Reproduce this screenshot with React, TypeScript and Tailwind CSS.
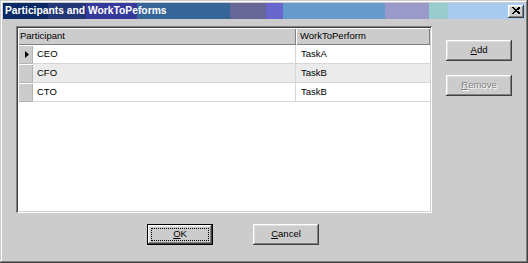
import React from 'react';

const raised =
  'shadow-[inset_-1px_-1px_0_#404040,inset_1px_1px_0_#ffffff,inset_-2px_-2px_0_#808080,inset_2px_2px_0_#dfdfdf]';

const rows = [
  { participant: 'CEO', work: 'TaskA', current: true },
  { participant: 'CFO', work: 'TaskB', current: false },
  { participant: 'CTO', work: 'TaskB', current: false },
];

function Button({ label, hotkey, disabled, isDefault }: { label: string; hotkey: number; disabled?: boolean; isDefault?: boolean }) {
  const text = (
    <span
      className={
        disabled
          ? 'text-[#808080] [text-shadow:1px_1px_0_#ffffff]'
          : 'text-black'
      }
    >
      {label.slice(0, hotkey)}
      <span className="underline underline-offset-[1px]">{label[hotkey]}</span>
      {label.slice(hotkey + 1)}
    </span>
  );

  if (isDefault) {
    return (
      <div className="flex h-[21px] w-[66px] border border-black">
        <div className={`relative flex flex-1 items-center justify-center bg-[#cccccc] ${raised}`}>
          <div className="absolute inset-[3px] border border-dotted border-black" />
          {text}
        </div>
      </div>
    );
  }

  return (
    <div className={`flex h-[21px] w-[66px] items-center justify-center bg-[#cccccc] ${raised}`}>
      {text}
    </div>
  );
}

export default function App() {
  return (
    <div
      className="flex h-[263px] w-[528px] flex-col bg-[#cccccc] p-[3px] text-[9.5px] text-black shadow-[inset_-1px_-1px_0_#404040,inset_1px_1px_0_#cccccc,inset_-2px_-2px_0_#808080,inset_2px_2px_0_#ffffff]"
      style={{ fontFamily: '"Liberation Sans", Arial, sans-serif' }}
    >
      {/* title bar */}
      <div className="flex h-[16px] items-center justify-between bg-[linear-gradient(to_right,#0a2a66_0px,#0a2a66_45px,#233777_45px,#233777_83px,#36399c_83px,#36399c_134px,#366598_134px,#366598_227px,#666699_227px,#666699_263px,#6666cc_263px,#6666cc_280px,#6699cc_280px,#6699cc_382px,#9999cc_382px,#9999cc_426px,#99cccc_426px,#99cccc_445px,#a6caf0_445px)] pl-[2px] pr-[1px]">
        <span className="text-[10.3px] font-bold leading-none text-white">Participants and WorkToPeforms</span>
        <div className={`flex h-[13px] w-[16px] items-center justify-center bg-[#cccccc] ${raised}`}>
          <svg width="8" height="7" viewBox="0 0 8 7" className="mb-[1px]">
            <path d="M0.5 0.5 L7 6.5 M1.5 0.5 L8 6.5 M7 0.5 L0.5 6.5 M8 0.5 L1.5 6.5" stroke="black" strokeWidth="1" shapeRendering="crispEdges" />
          </svg>
        </div>
      </div>

      {/* body */}
      <div className="flex flex-col">
        <div className="mt-[7px] flex">
          {/* data grid */}
          <div className="ml-[13px] flex h-[187px] w-[416px] flex-col bg-white p-[2px] shadow-[inset_1px_1px_0_#808080,inset_-1px_-1px_0_#ffffff,inset_2px_2px_0_#404040,inset_-2px_-2px_0_#d4d0c8]">
            <div className="flex h-[17px]">
              <div className="flex w-[278px] items-center bg-[#cccccc] pl-[2px] shadow-[inset_1px_1px_0_#ffffff,inset_-1px_-1px_0_#808080]">
                Participant
              </div>
              <div className="flex flex-1 items-center bg-[#cccccc] pl-[4px] shadow-[inset_1px_1px_0_#ffffff,inset_-1px_-1px_0_#808080]">
                WorkToPerform
              </div>
            </div>
            {rows.map((row, i) => (
              <div key={row.participant} className={`flex h-[19px] ${i % 2 === 1 ? 'bg-[#ebebeb]' : 'bg-white'}`}>
                <div className="flex w-[15px] items-center justify-center bg-[#cccccc] shadow-[inset_1px_1px_0_#ffffff,inset_-1px_-1px_0_#b4b4b4]">
                  {row.current && (
                    <svg width="4" height="7" viewBox="0 0 4 7" className="ml-[3px]">
                      <path d="M0 0 L4 3.5 L0 7 Z" fill="black" />
                    </svg>
                  )}
                </div>
                <div className="flex w-[263px] items-center border-b border-r border-[#d6d6d6] pl-[4px]">
                  {row.participant}
                </div>
                <div className="flex flex-1 items-center border-b border-[#d6d6d6] pl-[5px]">
                  {row.work}
                </div>
              </div>
            ))}
          </div>

          {/* side buttons */}
          <div className="ml-[14px] flex flex-col gap-[14px] pt-[14px]">
            <Button label="Add" hotkey={0} />
            <Button label="Remove" hotkey={0} disabled />
          </div>
        </div>

        {/* bottom buttons */}
        <div className="ml-[144px] mt-[11px] flex gap-[40px]">
          <Button label="OK" hotkey={0} isDefault />
          <Button label="Cancel" hotkey={0} />
        </div>
      </div>
    </div>
  );
}
